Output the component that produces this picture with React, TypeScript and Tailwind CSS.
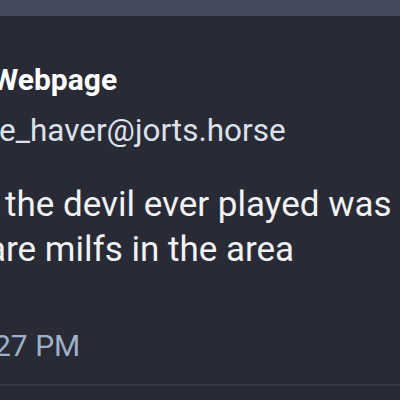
export default function App() {
  return (
    <div
      className="relative w-[400px] h-[400px] overflow-hidden bg-[#282b36]"
      style={{ fontFamily: "Roboto, 'Noto Sans', sans-serif" }}
    >
      <div className="h-[16px] bg-[#444a5e]" />
      <div className="flex flex-col">
        <div className="mt-[44px] -ml-[8px] text-[30px] leading-[40px] font-bold text-white whitespace-nowrap">
          Webpage
        </div>
        <div className="mt-[13px] -ml-[1px] text-[31.5px] leading-[36px] text-[#dde1ea] whitespace-nowrap">
          e_haver@jorts.horse
        </div>
        <div className="mt-[33px] text-[35px] leading-[45px] text-[#f2f2f2] whitespace-nowrap">
          <div className="pl-[5px]">the devil ever played was</div>
          <div className="-ml-[13px]">are milfs in the area</div>
        </div>
        <div className="mt-[54px] -ml-[6px] text-[30px] leading-[40px] text-[#9fb0c9] whitespace-nowrap">
          27 PM
        </div>
      </div>
      <div className="absolute left-0 right-0 top-[384px] h-[2px] bg-[#363a4a]" />
    </div>
  );
}
